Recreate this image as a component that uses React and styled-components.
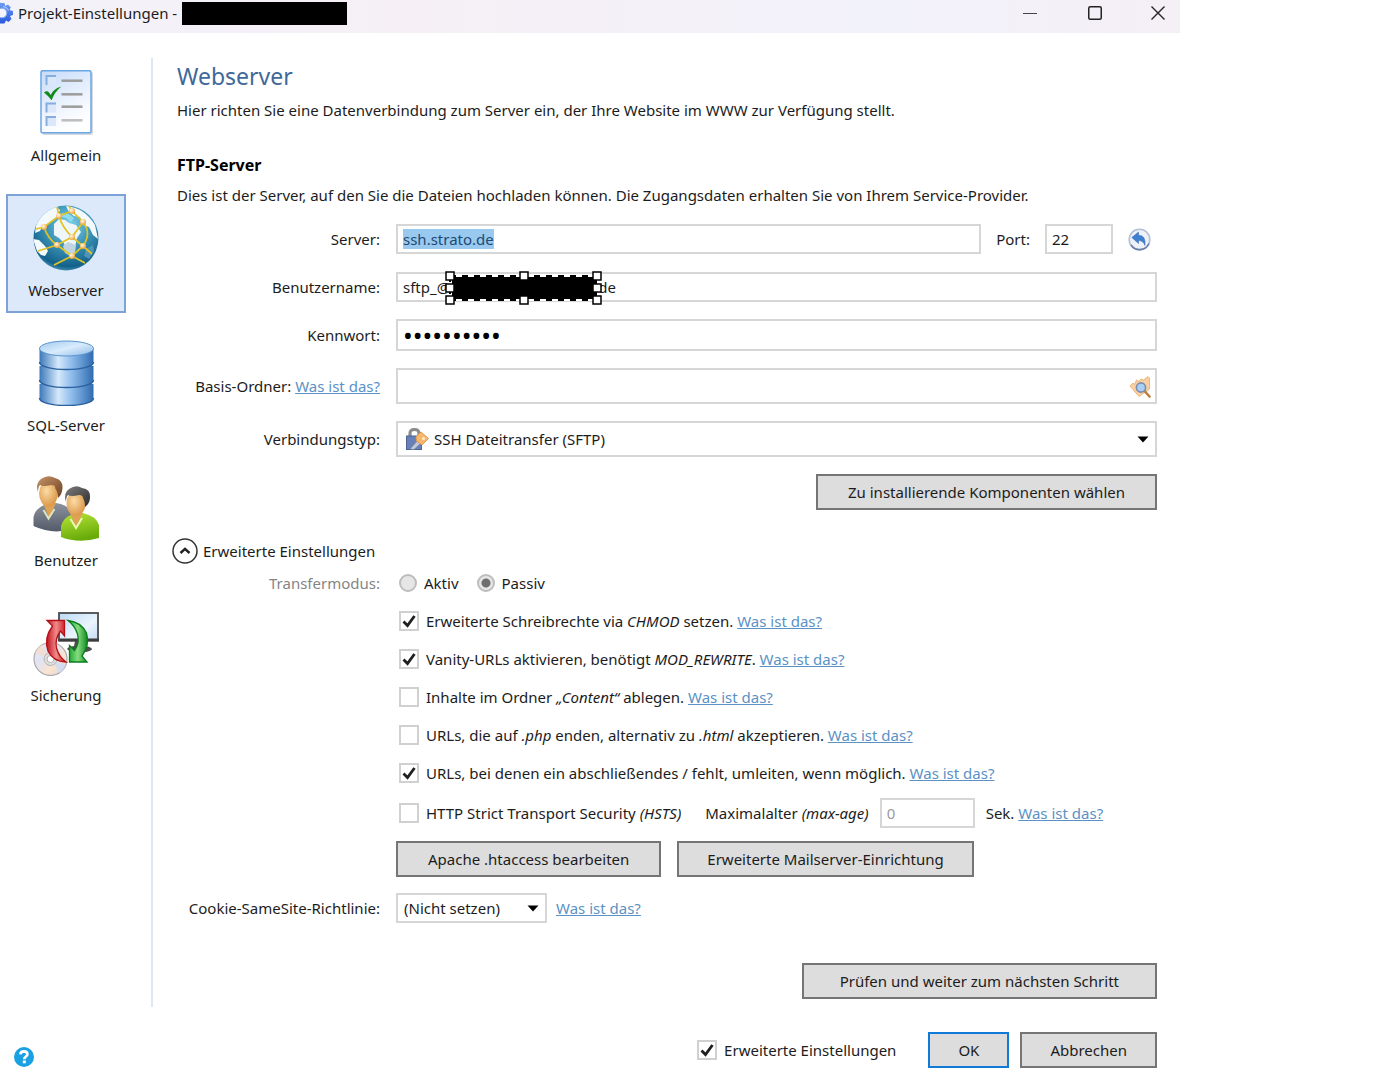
import styled, { createGlobalStyle, css } from 'styled-components';
import { useEffect, useRef, useState } from 'react';

const GlobalStyle = createGlobalStyle`
  * {
    box-sizing: border-box;
  }
  body {
    margin: 0;
    background: #ffffff;
    color: #1c1c1c;
    font-family: 'Noto Sans', 'Open Sans', sans-serif;
    font-size: 15px;
    line-height: 20px;
  }
  button, input, select {
    font: inherit;
    color: inherit;
    margin: 0;
  }
  input:focus, select:focus {
    outline: none;
  }
`;

const Window = styled.div`
  max-width: 1180px;
`;

const TitleBar = styled.header`
  display: flex;
  align-items: center;
  height: 33px;
  padding-bottom: 7px;
  background: linear-gradient(90deg, #f3f2f9, #f6eff6 35%, #f2f2fa 75%, #f5eff6);
`;

const TitleText = styled.h1`
  margin: 0 0 0 4px;
  font-size: 15px;
  font-weight: 400;
  white-space: nowrap;
`;

const TitleRedaction = styled.span`
  width: 165px;
  height: 23px;
  margin-left: 5px;
  background: #000000;
`;

const WindowButtons = styled.div`
  display: flex;
  gap: 17px;
  margin-left: auto;
`;

const WindowButton = styled.button`
  display: flex;
  align-items: center;
  justify-content: center;
  width: 48px;
  height: 26px;
  padding: 0;
  border: none;
  background: none;
  &:last-child {
    width: 44px;
  }
`;

const Body = styled.div`
  display: flex;
  padding-top: 25px;
`;

const Sidebar = styled.nav`
  display: flex;
  flex-direction: column;
  gap: 16px;
  flex: 0 0 151px;
  padding: 1px 0 0 6px;
`;

const NavItem = styled.button`
  display: flex;
  flex-direction: column;
  align-items: center;
  gap: 9px;
  width: 120px;
  height: 119px;
  padding: 9px 0 0;
  border: 2px solid transparent;
  background: none;
  ${({ $active }) =>
    $active &&
    css`
      border-color: #7da2d6;
      background: #dbe9fb;
    `}
`;

const Main = styled.main`
  flex: 1;
  min-width: 0;
  padding: 3px 23px 8px 24px;
  border-left: 2px solid #dce8f9;
`;

const PageTitle = styled.h2`
  margin: 0;
  font-size: 23px;
  line-height: 30px;
  font-weight: 400;
  color: #41689a;
`;

const SectionTitle = styled.h3`
  margin: 33px 0 0;
  font-size: 16px;
  line-height: 22px;
  font-weight: 700;
  color: #000000;
`;

const Intro = styled.p`
  margin: 8px 0 0;
  line-height: 22px;
`;

const Fields = styled.div`
  display: flex;
  flex-direction: column;
  gap: 17px;
  margin-top: 17px;
`;

const Row = styled.div`
  display: grid;
  grid-template-columns: 203px minmax(0, 1fr);
  column-gap: 16px;
  align-items: center;
  min-height: ${({ $height }) => $height || 20}px;
  margin-top: ${({ $top }) => $top || 0}px;
`;

const RowLabel = styled.div`
  text-align: right;
  white-space: nowrap;
  color: ${({ $muted }) => ($muted ? '#858585' : 'inherit')};
`;

const Line = styled.div`
  display: flex;
  align-items: center;
  gap: ${({ $gap }) => $gap || 0}px;
`;

const ServerLine = styled(Line)`
  padding-right: 6px;
`;

const FieldWrap = styled.div`
  position: relative;
  display: flex;
  flex: ${({ $width }) => ($width ? `0 0 ${$width}px` : '1')};
`;

const TextInput = styled.input`
  width: 100%;
  min-width: 0;
  height: ${({ $height }) => $height || 30}px;
  padding: 0 5px;
  border: 2px solid #d6d6d6;
  border-radius: 0;
  background: #ffffff;
  &::selection {
    background: #99c9ef;
    color: #1d4a75;
  }
  &[type='password'] {
    font-size: 26px;
    color: #000000;
  }
  &:disabled {
    color: #9a9a9a;
  }
`;

const Select = styled.select`
  width: 100%;
  height: ${({ $height }) => $height || 30}px;
  padding: 0 24px 0 ${({ $icon }) => ($icon ? 36 : 6)}px;
  border: 2px solid #d6d6d6;
  border-radius: 0;
  background: #ffffff;
  appearance: none;
`;

const Overlay = styled.span`
  position: absolute;
  top: 0;
  bottom: 0;
  ${({ $side, $inset }) => `${$side}: ${$inset}px;`}
  display: flex;
  align-items: center;
  pointer-events: none;
`;

const IconButton = styled.button`
  display: flex;
  flex: none;
  padding: 0;
  border: none;
  background: none;
  pointer-events: auto;
`;

// marquee that lies over the user name
const Marquee = styled.svg`
  position: absolute;
  top: -1px;
  left: 49px;
`;

const Link = styled.a`
  color: #5a92c6;
  text-decoration: underline;
  white-space: nowrap;
`;

const Button = styled.button`
  height: 36px;
  padding: 0 ${({ $pad }) => $pad || 28}px;
  border: 2px solid ${({ $primary }) => ($primary ? '#0f7ad8' : '#757575')};
  background: #dddddd;
  white-space: nowrap;
`;

const ButtonRow = styled.div`
  display: flex;
  justify-content: flex-end;
  margin-top: ${({ $top }) => $top || 0}px;
`;

const Expander = styled.button`
  display: flex;
  align-items: center;
  gap: 5px;
  margin: 28px 0 9px -5px;
  padding: 0;
  border: none;
  background: none;
`;

const Options = styled.div`
  display: flex;
  flex-direction: column;
  gap: 18px;
  padding-left: 3px;
`;

const RadioLabel = styled.label`
  display: flex;
  align-items: center;
  gap: 7px;
`;

const Radio = styled.input`
  appearance: none;
  width: 18px;
  height: 18px;
  border: 2px solid #bdbdbd;
  border-radius: 50%;
  background: #e6e6e6;
  &:checked {
    background: radial-gradient(circle, #6e6e6e 4px, #e6e6e6 5px);
  }
`;

const BoxWrap = styled.span`
  position: relative;
  display: flex;
  flex: none;
  svg {
    position: absolute;
    inset: 0;
    pointer-events: none;
  }
`;

const Box = styled.input`
  appearance: none;
  width: 20px;
  height: 20px;
  border: 2px solid #d0d0d0;
  background: #ffffff;
`;

const Footer = styled.footer`
  display: flex;
  align-items: center;
  padding: 25px 23px 14px 14px;
`;

const FooterCheck = styled(Line)`
  margin-right: 21px;
`;

const HelpButton = styled(IconButton)`
  margin: 14px auto 0 0;
`;

const Shape = ({ w, h, children }) => (
  <svg width={w} height={h} viewBox={`0 0 ${w} ${h}`} aria-hidden="true">
    {children}
  </svg>
);

const GearIcon = () => (
  <Shape w={14} h={22}>
    <defs>
      <linearGradient id="gear" x1="0" y1="0" x2="0" y2="1">
        <stop offset="0" stopColor="#6f9ff5" />
        <stop offset="1" stopColor="#2a58dc" />
      </linearGradient>
    </defs>
    <g fill="url(#gear)">
      <path d="M0.500 1H4.500L5.300 4L8 2.500L10.800 5.500L9.500 8L13 9V13L10 14L11.500 17L8.500 20L6 18.500L4.500 21.500H0V0Z" />
    </g>
    <circle cx="2" cy="11" r="4.800" fill="#f5f6fd" stroke="#88aef4" strokeWidth="1" />
    <path d="M3 4.500a7 7 0 0 1 5.500 4" fill="none" stroke="#a9c9fb" strokeWidth="1.200" />
  </Shape>
);

const GeneralIcon = () => (
  <Shape w={66} h={66}>
    <defs>
      <linearGradient id="doc" x1="0" y1="0" x2="0.4" y2="1">
        <stop offset="0" stopColor="#c5dbfa" />
        <stop offset="0.7" stopColor="#f1f6fe" />
        <stop offset="1" stopColor="#ffffff" />
      </linearGradient>
    </defs>
    <rect x="9" y="2" width="51" height="63" rx="2" fill="#d5d9df" />
    <rect x="8" y="0.700" width="50" height="62" rx="1.500" fill="url(#doc)" stroke="#6ba6e4" strokeWidth="1.500" />
    {[5, 32.5, 46].map((y) => (
      <g key={y}>
        <rect x="13" y={y} width="10" height="10" fill="#dbe7fa" />
        <path d={`M23 ${y + 1}H13.500V${y + 10}`} fill="none" stroke="#86addf" strokeWidth="2" />
      </g>
    ))}
    {[10.7, 24.3, 36.7, 50.3].map((y, i) => (
      <path key={y} d={`M28.500 ${y}H49.500`} stroke={i === 3 ? '#bdbdbd' : '#9c9c9c'} strokeWidth="2.500" />
    ))}
    <path
      d="M11 22.500Q13 20.500 15 21.500Q16.500 22.500 17.700 25Q20.500 18.500 28.300 16.500Q21.500 22 18.600 30.200Q16 26.500 11 22.500Z"
      fill="#138a1a"
    />
  </Shape>
);

const GLOBE_NODES = [
  [26, 11],
  [39, 6],
  [50, 17],
  [11, 22],
  [39, 32],
  [24, 40],
  [50, 41],
  [39, 51]
];

const GlobeIcon = () => (
  <Shape w={66} h={66}>
    <defs>
      <radialGradient id="sea" cx="0.55" cy="0.3" r="0.75">
        <stop offset="0" stopColor="#7fd2ea" />
        <stop offset="0.45" stopColor="#3d94b8" />
        <stop offset="0.85" stopColor="#12618a" />
        <stop offset="1" stopColor="#5fa6c4" />
      </radialGradient>
      <radialGradient id="node" cx="0.4" cy="0.35" r="0.7">
        <stop offset="0" stopColor="#fffbe6" />
        <stop offset="1" stopColor="#ec9a2c" />
      </radialGradient>
      <clipPath id="globe">
        <circle cx="33" cy="33" r="32.500" />
      </clipPath>
    </defs>
    <circle cx="33" cy="33" r="32.500" fill="url(#sea)" />
    <g clipPath="url(#globe)">
      <path d="M4 14Q10 5 22 1L27 5L24 12L18 16L14 20L10 20L7 26L2 28Z" fill="#f4fafc" />
      <path d="M33 1Q52 3 62 20L65 34L60 30L56 22L50 20L47 12L41 11L36 7Z" fill="#f4fafc" />
      <path d="M21 19L26 14L32 15L36 18L43 20L48 27L44 33L42 42L37 50L33 47L31 38L26 33L21 30Z" fill="#eef6fa" />
      <path d="M0 34L6 35L12 41L15 46L12 51L8 50L4 46Z" fill="#f4fafc" />
      <path d="M53 44L60 40L61 46L56 54L51 51Z" fill="#5c9dbb" opacity="0.8" />
      <path d="M30 41L35 37L43 40L42 48L37 51L32 48Z" fill="#bfd6e2" />
      <path d="M29 8L36 9L41 13L38 17L33 13L28 12Z" fill="#8fdcee" />
      <g fill="none" stroke="#e2c41f" strokeWidth="1.700">
        <path d="M3 24L11 22L26 11L39 6L50 17L39 32L24 40L5 46" />
        <path d="M24 2L26 11Q29 22 39 32L50 41L59 49" />
        <path d="M11 22Q15 34 24 40L39 51L52 58M39 51L21 60" />
        <path d="M36 1L39 6M50 17Q59 28 50 41L39 51" />
      </g>
    </g>
    {GLOBE_NODES.map(([x, y]) => (
      <circle key={`${x}-${y}`} cx={x} cy={y} r="3" fill="url(#node)" />
    ))}
  </Shape>
);

const DatabaseIcon = () => (
  <Shape w={66} h={66}>
    <defs>
      <linearGradient id="cyl">
        <stop offset="0" stopColor="#3c78ba" />
        <stop offset="0.35" stopColor="#d5e9fb" />
        <stop offset="0.6" stopColor="#8dbbea" />
        <stop offset="1" stopColor="#2f6bb0" />
      </linearGradient>
      <linearGradient id="lid" x1="0" y1="0" x2="1" y2="1">
        <stop offset="0" stopColor="#9ec7ef" />
        <stop offset="0.5" stopColor="#d9ecfc" />
        <stop offset="1" stopColor="#8bb9e8" />
      </linearGradient>
    </defs>
    {[44, 26, 8].map((y) => (
      <g key={y}>
        <path
          d={`M6.500 ${y}V${y + 14}C6.500 ${y + 24} 60.500 ${y + 24} 60.500 ${y + 14}V${y}Z`}
          fill="url(#cyl)"
        />
        <path
          d={`M6.500 ${y + 14}C6.500 ${y + 24} 60.500 ${y + 24} 60.500 ${y + 14}`}
          fill="none"
          stroke="#2a619f"
          strokeWidth="1.500"
        />
      </g>
    ))}
    <ellipse cx="33.500" cy="8.500" rx="27" ry="7.500" fill="url(#lid)" stroke="#5b93cd" />
  </Shape>
);

const UsersIcon = () => (
  <Shape w={66} h={66}>
    <defs>
      <radialGradient id="skin" cx="0.4" cy="0.4" r="0.65">
        <stop offset="0" stopColor="#fbdca6" />
        <stop offset="1" stopColor="#d99444" />
      </radialGradient>
      <linearGradient id="grey" x1="0" y1="0" x2="0" y2="1">
        <stop offset="0" stopColor="#8d939e" />
        <stop offset="1" stopColor="#535a68" />
      </linearGradient>
      <linearGradient id="green" x1="0" y1="0" x2="0.3" y2="1">
        <stop offset="0" stopColor="#b9e53a" />
        <stop offset="1" stopColor="#69ac0a" />
      </linearGradient>
      <linearGradient id="brown" x1="0" y1="0" x2="1" y2="1">
        <stop offset="0" stopColor="#c6956b" />
        <stop offset="1" stopColor="#6e4020" />
      </linearGradient>
      <linearGradient id="black" x1="0" y1="0" x2="1" y2="1">
        <stop offset="0" stopColor="#7d7d7d" />
        <stop offset="1" stopColor="#2b2b2b" />
      </linearGradient>
    </defs>
    <path d="M0.500 51V42Q2 34 11 30L23 28Q36 30 38 38V54Q20 60 0.500 51Z" fill="url(#grey)" />
    <path d="M10 28L16 43L23 28Z" fill="#e0a255" />
    <path d="M10.500 35L15.500 43.500L21.500 34" fill="none" stroke="#dce6bf" strokeWidth="2" />
    <ellipse cx="15.500" cy="18.500" rx="9.500" ry="13" fill="url(#skin)" />
    <path
      d="M5 17Q2 9 8 4Q15 -1 22 3Q30 5 29.500 13Q29 20 25 23Q25 17 22 13Q23 10 18 10Q10 12 7 10Q5 12 5 17Z"
      fill="url(#brown)"
    />
    <path d="M28 62V51Q30 43 38 40L50 38Q63 41 66 50V63Q46 69 28 62Z" fill="url(#green)" />
    <path d="M37 38L43 52L50 38Z" fill="#e0a255" />
    <path d="M37.500 44L43 53L49 43" fill="none" stroke="#eaf8b4" strokeWidth="2" />
    <ellipse cx="43" cy="28.500" rx="9.500" ry="12.500" fill="url(#skin)" />
    <path
      d="M33 27Q30 18 36 14Q43 9 49 13Q58 14 57 23Q56.500 29 52 32Q52 26 50 23Q50 20 46 20Q38 22 35 20Q33 22 33 27Z"
      fill="url(#black)"
    />
  </Shape>
);

const BackupIcon = () => (
  <Shape w={66} h={66}>
    <defs>
      <linearGradient id="screen" x1="0" y1="0" x2="1" y2="1">
        <stop offset="0" stopColor="#bcd9f5" />
        <stop offset="0.6" stopColor="#eaf4fd" />
        <stop offset="1" stopColor="#c2dcf5" />
      </linearGradient>
      <linearGradient id="cd" x1="0" y1="0" x2="1" y2="1">
        <stop offset="0" stopColor="#ececec" />
        <stop offset="0.35" stopColor="#dfe3f5" />
        <stop offset="0.65" stopColor="#fbe3cf" />
        <stop offset="1" stopColor="#d4d4dc" />
      </linearGradient>
      <linearGradient id="red">
        <stop offset="0" stopColor="#c1121c" />
        <stop offset="0.5" stopColor="#f08a8a" />
        <stop offset="1" stopColor="#c9151e" />
      </linearGradient>
      <linearGradient id="grn">
        <stop offset="0" stopColor="#19a02c" />
        <stop offset="0.5" stopColor="#86dc80" />
        <stop offset="1" stopColor="#0d8a20" />
      </linearGradient>
    </defs>
    <path d="M42 31H51L52 36Q59 37 59 39.500Q56 42.500 46 42.500Q36 42 34 39Q35 36.500 41 36Z" fill="#4f4f4f" />
    <rect x="26" y="3" width="39" height="27.500" fill="url(#screen)" stroke="#4a4a4a" strokeWidth="1.800" />
    <path d="M25.500 28.500H66V31.500H25.500Z" fill="#3d3d3d" />
    <circle cx="17.500" cy="49" r="16.500" fill="url(#cd)" stroke="#ababab" strokeWidth="1.200" />
    <path d="M17.500 49L2 43Q4 37 9 35Z" fill="#f6dbc9" opacity="0.7" />
    <path d="M17.500 49L33 55Q31 60 27 63Z" fill="#cddcf6" opacity="0.8" />
    <circle cx="17.500" cy="49" r="6.500" fill="#dedede" stroke="#b5b5b5" />
    <circle cx="17.500" cy="49" r="3.500" fill="#ffffff" stroke="#b5b5b5" />
    <path
      d="M14 10.500H31.500V26L27.500 21Q21.500 29 23.500 38Q26 47 33 52Q20 51.500 15 41Q10.500 28 19.500 16Z"
      fill="url(#red)"
      stroke="#b31018"
      strokeWidth="1.300"
    />
    <path
      d="M35 10.500Q48 12 53.500 23Q57 35 49 46L54 52H36.500V35.500L41.500 40.500Q47 33 44.500 24Q42 16 35 10.500Z"
      fill="url(#grn)"
      stroke="#0b7d1b"
      strokeWidth="1.300"
    />
  </Shape>
);

const LockIcon = () => (
  <Shape w={24} h={24}>
    <path d="M5 10V6.500Q5 2.500 9.500 2.500Q14 2.500 14 6.500V10" fill="none" stroke="#8b8b8b" strokeWidth="3.200" />
    <rect x="1.500" y="9" width="15" height="13.500" fill="#6780b6" stroke="#4c6496" />
    <path d="M5 22L15 11L19 13L9 22.500Z" fill="#c3cbdb" stroke="#77839c" strokeWidth="0.600" />
    <path d="M11 10L16 5L23.500 11.500L17 18L11.500 14Z" fill="#f6b76d" stroke="#dd9a4e" />
    <circle cx="18.500" cy="11.500" r="1.600" fill="#ffe9c4" />
  </Shape>
);

const UndoIcon = () => (
  <Shape w={23} h={23}>
    <circle cx="11.500" cy="11.500" r="10.300" fill="#eef2f8" stroke="#b3bfd6" strokeWidth="1.600" />
    <path d="M3 17A10.300 10.300 0 0 0 21 15.500" fill="none" stroke="#6b7ea8" strokeWidth="1.600" />
    <path
      d="M3.800 9.500L10.500 4V7.200Q18 7 17 17.500Q15 12.500 10.500 12.500V15.500Z"
      fill="#3f7fd0"
      stroke="#2f68b5"
      strokeWidth="0.500"
    />
  </Shape>
);

const FolderSearchIcon = () => (
  <Shape w={22} h={23}>
    <path
      d="M1 11L4 8L5.500 9.500L7.500 5L10 6.500L12 4L14.500 5L19 1.500L20.500 3V14L10 21.500Z"
      fill="#f7cfa0"
      stroke="#edb77e"
    />
    <path d="M15.500 16L20.500 21.500" stroke="#bb7f38" strokeWidth="2.600" strokeLinecap="round" />
    <circle cx="12" cy="12.500" r="4.600" fill="#a8d0f5" stroke="#7b8db1" strokeWidth="1.600" />
  </Shape>
);

const CaretIcon = () => (
  <Shape w={12} h={7}>
    <path d="M0.500 0.500H11.500L6 6.500Z" fill="#000000" />
  </Shape>
);

const HelpIcon = () => (
  <Shape w={20} h={20}>
    <circle cx="10" cy="10" r="10" fill="#1ba1e2" />
    <path
      d="M6.400 7.400Q6.600 4.400 10 4.400Q13.400 4.500 13.400 7.200Q13.400 8.700 11.600 9.800Q10.300 10.600 10.300 12.300"
      fill="none"
      stroke="#ffffff"
      strokeWidth="2.700"
    />
    <rect x="8.800" y="13.500" width="3" height="2.800" fill="#ffffff" />
  </Shape>
);

const HelpLink = () => <Link href="#hilfe">Was ist das?</Link>;

const NAV_ITEMS = [
  { name: 'Allgemein', Icon: GeneralIcon },
  { name: 'Webserver', Icon: GlobeIcon },
  { name: 'SQL-Server', Icon: DatabaseIcon },
  { name: 'Benutzer', Icon: UsersIcon },
  { name: 'Sicherung', Icon: BackupIcon }
];

const OPTIONS = [
  {
    id: 'chmod',
    on: true,
    text: (
      <>
        Erweiterte Schreibrechte via <i>CHMOD</i> setzen.
      </>
    )
  },
  {
    id: 'vanity',
    on: true,
    text: (
      <>
        Vanity-URLs aktivieren, benötigt <i>MOD_REWRITE</i>.
      </>
    )
  },
  {
    id: 'content',
    on: false,
    text: (
      <>
        Inhalte im Ordner <i>„Content“</i> ablegen.
      </>
    )
  },
  {
    id: 'php',
    on: false,
    text: (
      <>
        URLs, die auf <i>.php</i> enden, alternativ zu <i>.html</i> akzeptieren.
      </>
    )
  },
  { id: 'slash', on: true, text: 'URLs, bei denen ein abschließendes / fehlt, umleiten, wenn möglich.' }
];

const CheckBox = ({ id, defaultChecked }) => {
  const [checked, setChecked] = useState(defaultChecked);

  return (
    <BoxWrap>
      <Box id={id} type="checkbox" checked={checked} onChange={(e) => setChecked(e.target.checked)} />
      {checked && (
        <Shape w={20} h={20}>
          <path d="M4.500 10.500L8.500 14.500L15.500 5" fill="none" stroke="#1f1f1f" strokeWidth="2.800" />
        </Shape>
      )}
    </BoxWrap>
  );
};

const UserMarquee = () => (
  <Marquee width="158" height="34" viewBox="0 0 158 34" aria-hidden="true">
    <rect x="5" y="5" width="147" height="24" fill="none" stroke="#ffffff" strokeWidth="2" />
    <rect x="5" y="5" width="147" height="24" fill="none" stroke="#000000" strokeWidth="2" strokeDasharray="6 6" />
    <rect x="7" y="6" width="145" height="22" fill="#000000" />
    {[5, 79, 152].map((x) =>
      [5, 17, 29].map(
        (y) =>
          !(x === 79 && y === 17) && (
            <rect
              key={`${x}-${y}`}
              x={x - 4}
              y={y - 4}
              width="8"
              height="8"
              fill="#ffffff"
              stroke="#000000"
              strokeWidth="1.500"
            />
          )
      )
    )}
  </Marquee>
);

const App = () => {
  const serverRef = useRef(null);
  const [active, setActive] = useState('Webserver');
  const [expanded, setExpanded] = useState(true);

  useEffect(() => {
    serverRef.current.focus();
    serverRef.current.select();
  }, []);

  return (
    <Window>
      <GlobalStyle />
      <TitleBar>
        <GearIcon />
        <TitleText>Projekt-Einstellungen -</TitleText>
        <TitleRedaction />
        <WindowButtons>
          <WindowButton aria-label="Minimieren">
            <Shape w={14} h={14}>
              <path d="M0 7.500H14" stroke="#444444" strokeWidth="1" />
            </Shape>
          </WindowButton>
          <WindowButton aria-label="Maximieren">
            <Shape w={14} h={14}>
              <rect
                x="0.750"
                y="0.750"
                width="12.500"
                height="12.500"
                rx="1.500"
                fill="none"
                stroke="#222222"
                strokeWidth="1.500"
              />
            </Shape>
          </WindowButton>
          <WindowButton aria-label="Schließen">
            <Shape w={14} h={14}>
              <path d="M0.500 0.500L13.500 13.500M13.500 0.500L0.500 13.500" stroke="#222222" strokeWidth="1.400" />
            </Shape>
          </WindowButton>
        </WindowButtons>
      </TitleBar>

      <Body>
        <Sidebar>
          {NAV_ITEMS.map(({ name, Icon }) => (
            <NavItem key={name} $active={name === active} onClick={() => setActive(name)}>
              <Icon />
              <span>{name}</span>
            </NavItem>
          ))}
        </Sidebar>

        <Main>
          <PageTitle>Webserver</PageTitle>
          <Intro>
            Hier richten Sie eine Datenverbindung zum Server ein, der Ihre Website im WWW zur Verfügung stellt.
          </Intro>
          <SectionTitle>FTP-Server</SectionTitle>
          <Intro>
            Dies ist der Server, auf den Sie die Dateien hochladen können. Die Zugangsdaten erhalten Sie von Ihrem
            Service-Provider.
          </Intro>

          <Fields>
            <Row $height={32}>
              <RowLabel as="label" htmlFor="server">
                Server:
              </RowLabel>
              <ServerLine $gap={15}>
                <FieldWrap>
                  <TextInput id="server" ref={serverRef} defaultValue="ssh.strato.de" />
                </FieldWrap>
                <label htmlFor="port">Port:</label>
                <FieldWrap $width={68}>
                  <TextInput id="port" defaultValue="22" />
                </FieldWrap>
                <IconButton aria-label="Zurücksetzen">
                  <UndoIcon />
                </IconButton>
              </ServerLine>
            </Row>
            <Row $height={30}>
              <RowLabel as="label" htmlFor="user">
                Benutzername:
              </RowLabel>
              <FieldWrap>
                <TextInput id="user" defaultValue={`sftp_@${'\u00a0'.repeat(38)}de`} />
                <UserMarquee />
              </FieldWrap>
            </Row>
            <Row $height={32}>
              <RowLabel as="label" htmlFor="password">
                Kennwort:
              </RowLabel>
              <TextInput id="password" type="password" defaultValue="0000000000" $height={32} />
            </Row>
            <Row $height={36}>
              <RowLabel>
                <label htmlFor="folder">Basis-Ordner:</label> <HelpLink />
              </RowLabel>
              <FieldWrap>
                <TextInput id="folder" $height={36} />
                <Overlay $side="right" $inset={6}>
                  <IconButton aria-label="Ordner wählen">
                    <FolderSearchIcon />
                  </IconButton>
                </Overlay>
              </FieldWrap>
            </Row>
            <Row $height={36}>
              <RowLabel as="label" htmlFor="connection">
                Verbindungstyp:
              </RowLabel>
              <FieldWrap>
                <Select id="connection" $height={36} $icon>
                  <option>SSH Dateitransfer (SFTP)</option>
                </Select>
                <Overlay $side="left" $inset={9}>
                  <LockIcon />
                </Overlay>
                <Overlay $side="right" $inset={8}>
                  <CaretIcon />
                </Overlay>
              </FieldWrap>
            </Row>
            <ButtonRow>
              <Button $pad={30}>Zu installierende Komponenten wählen</Button>
            </ButtonRow>
          </Fields>

          <Expander aria-expanded={expanded} onClick={() => setExpanded(!expanded)}>
            <Shape w={26} h={26}>
              <circle cx="13" cy="13" r="12" fill="none" stroke="#333333" strokeWidth="1.500" />
              <path d="M8.500 15L13 10.800L17.500 15" fill="none" stroke="#222222" strokeWidth="2.400" />
            </Shape>
            Erweiterte Einstellungen
          </Expander>

          {expanded && (
            <>
              <Row>
                <RowLabel $muted>Transfermodus:</RowLabel>
                <Options>
                  <Line $gap={18}>
                    <RadioLabel>
                      <Radio type="radio" name="mode" disabled />
                      Aktiv
                    </RadioLabel>
                    <RadioLabel>
                      <Radio type="radio" name="mode" defaultChecked disabled />
                      Passiv
                    </RadioLabel>
                  </Line>
                </Options>
              </Row>
              <Row $top={18}>
                <span />
                <Options>
                  {OPTIONS.map(({ id, on, text }) => (
                    <Line key={id} $gap={7}>
                      <CheckBox id={id} defaultChecked={on} />
                      <span>
                        <label htmlFor={id}>{text}</label> <HelpLink />
                      </span>
                    </Line>
                  ))}
                </Options>
              </Row>
              <Row $top={15} $height={30}>
                <span />
                <Options>
                  <Line $gap={24}>
                    <Line $gap={7}>
                      <CheckBox id="hsts" defaultChecked={false} />
                      <label htmlFor="hsts">
                        HTTP Strict Transport Security <i>(HSTS)</i>
                      </label>
                    </Line>
                    <Line $gap={11}>
                      <label htmlFor="maxage">
                        Maximalalter <i>(max-age)</i>
                      </label>
                      <FieldWrap $width={95}>
                        <TextInput id="maxage" defaultValue="0" disabled />
                      </FieldWrap>
                      <span>
                        Sek. <HelpLink />
                      </span>
                    </Line>
                  </Line>
                </Options>
              </Row>
              <Row $top={13}>
                <span />
                <Line $gap={16}>
                  <Button $pad={30}>Apache .htaccess bearbeiten</Button>
                  <Button>Erweiterte Mailserver-Einrichtung</Button>
                </Line>
              </Row>
              <Row $top={16}>
                <RowLabel as="label" htmlFor="cookie">
                  Cookie-SameSite-Richtlinie:
                </RowLabel>
                <Line $gap={9}>
                  <FieldWrap $width={151}>
                    <Select id="cookie">
                      <option>(Nicht setzen)</option>
                    </Select>
                    <Overlay $side="right" $inset={8}>
                      <CaretIcon />
                    </Overlay>
                  </FieldWrap>
                  <HelpLink />
                </Line>
              </Row>
            </>
          )}

          <ButtonRow $top={40}>
            <Button $pad={36}>Prüfen und weiter zum nächsten Schritt</Button>
          </ButtonRow>
        </Main>
      </Body>

      <Footer>
        <HelpButton aria-label="Hilfe">
          <HelpIcon />
        </HelpButton>
        <Line $gap={11}>
          <FooterCheck $gap={7}>
            <CheckBox id="advanced" defaultChecked />
            <label htmlFor="advanced">Erweiterte Einstellungen</label>
          </FooterCheck>
          <Button $primary>OK</Button>
          <Button>Abbrechen</Button>
        </Line>
      </Footer>
    </Window>
  );
};

export default App;
